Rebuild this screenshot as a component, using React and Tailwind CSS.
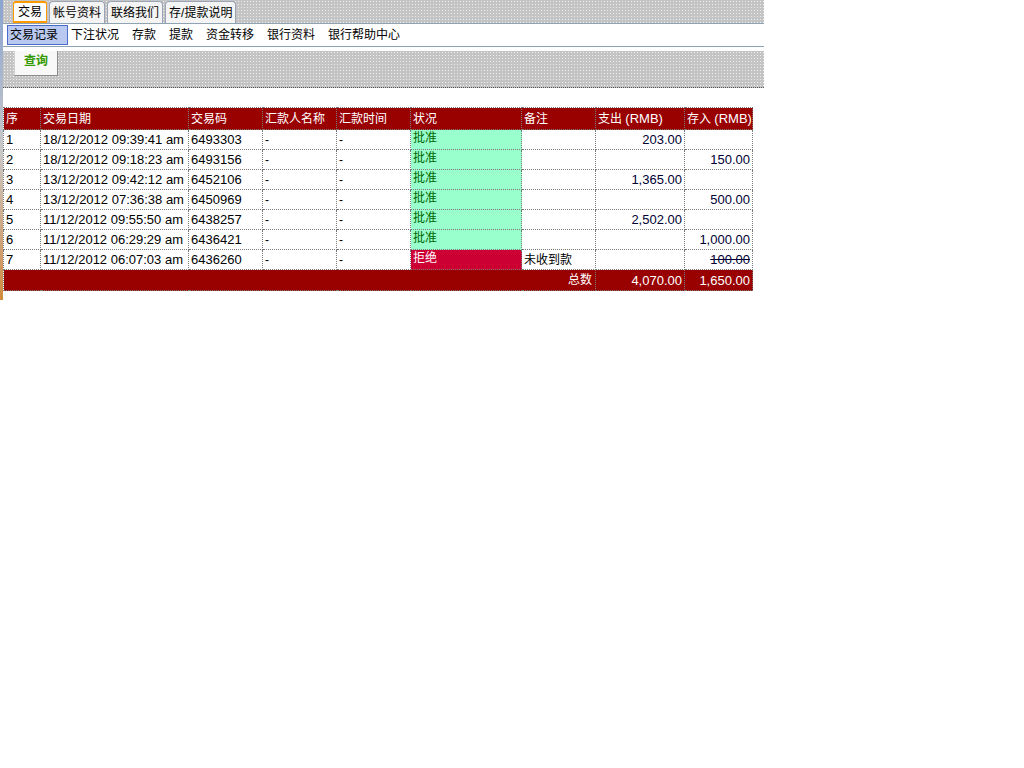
import React from "react";

const rows = [
    { no: "1", date: "18/12/2012 09:39:41 am", code: "6493303", status: "批准", note: "", out: "203.00", inn: "" },
    { no: "2", date: "18/12/2012 09:18:23 am", code: "6493156", status: "批准", note: "", out: "", inn: "150.00" },
    { no: "3", date: "13/12/2012 09:42:12 am", code: "6452106", status: "批准", note: "", out: "1,365.00", inn: "" },
    { no: "4", date: "13/12/2012 07:36:38 am", code: "6450969", status: "批准", note: "", out: "", inn: "500.00" },
    { no: "5", date: "11/12/2012 09:55:50 am", code: "6438257", status: "批准", note: "", out: "2,502.00", inn: "" },
    { no: "6", date: "11/12/2012 06:29:29 am", code: "6436421", status: "批准", note: "", out: "", inn: "1,000.00" },
    { no: "7", date: "11/12/2012 06:07:03 am", code: "6436260", status: "拒绝", note: "未收到款", out: "", inn: "100.00", rejected: true },
];

const tabs = ["交易", "帐号资料", "联络我们", "存/提款说明"];
const subnav = ["下注状况", "存款", "提款", "资金转移", "银行资料", "银行帮助中心"];

const dots = "bg-[#c4c4c4] bg-[radial-gradient(circle,#eeeeee_0.7px,transparent_0.9px)] bg-[length:3px_3px]";
const td = "border border-dotted border-[#7a7a7a] h-[20px] px-[2px] py-0 align-middle whitespace-nowrap";
const num = "text-[13px]";
const th = "border border-dotted border-[#7a7a7a] h-[22px] px-[2px] py-0 text-left font-normal bg-[#990000] text-white whitespace-nowrap";

function App() {
    return (
        <div className="relative w-[1024px] h-[768px] bg-white text-[12px] text-black font-['Liberation_Sans','Noto_Sans_CJK_SC',sans-serif] leading-none">
            {/* left decoration strip */}
            <div className="absolute left-0 top-0 w-[3px] h-[300px] bg-gradient-to-b from-[#8aa4d0] via-[#c8c8c8] to-[#d08a3a]" />

            <div className="ml-[3px] w-[761px]">
                {/* top tabs */}
                <div className={`${dots} h-[24px] flex items-end pl-[10px] gap-[2px] border-b border-[#8fa3b3]`}>
                    {tabs.map((t, i) => (
                        <div
                            key={t}
                            className={
                                i === 0
                                    ? "h-[22px] px-[4px] flex items-center bg-white border-t-2 border-x border-[#ff9900] rounded-t-[3px] border-b-2 border-b-[#ff9900]"
                                    : "h-[22px] px-[3px] flex items-center bg-[#f4f4f4] border-t border-x border-[#9aa4b8] rounded-t-[4px]"
                            }
                        >
                            {t}
                        </div>
                    ))}
                </div>

                {/* sub nav */}
                <div className="h-[23px] bg-white flex items-center border-b border-[#8fa3b3]">
                    <div className="ml-[4px] h-[20px] w-[61px] flex items-center pl-[2px] bg-[#b8c8f0] border border-[#4a6cc8]">
                        交易记录
                    </div>
                    <div className="ml-[3px] flex items-center">
                        {subnav.map((s) => (
                            <span key={s} className="mr-[13px]">{s}</span>
                        ))}
                    </div>
                </div>

                {/* query band */}
                <div className={`${dots} mt-[4px] h-[37px] border-b border-dotted border-[#555] pl-[11px]`}>
                    <div className="w-[44px] h-[25px] bg-[#f8f8f8] border-r border-b border-[#8a8a8a] border-l border-l-[#cfcfcf] flex justify-center pt-[4px] text-[#339900] font-bold">
                        查询
                    </div>
                </div>

                {/* table */}
                <table className="mt-[19px] border-collapse table-fixed w-[749px]">
                    <colgroup>
                        <col className="w-[37px]" />
                        <col className="w-[148px]" />
                        <col className="w-[74px]" />
                        <col className="w-[74px]" />
                        <col className="w-[74px]" />
                        <col className="w-[111px]" />
                        <col className="w-[74px]" />
                        <col className="w-[89px]" />
                        <col className="w-[68px]" />
                    </colgroup>
                    <thead>
                        <tr>
                            <th className={th}>序</th>
                            <th className={th}>交易日期</th>
                            <th className={th}>交易码</th>
                            <th className={th}>汇款人名称</th>
                            <th className={th}>汇款时间</th>
                            <th className={th}>状况</th>
                            <th className={th}>备注</th>
                            <th className={th}>支出 <span className={num}>(RMB)</span></th>
                            <th className={th}>存入 <span className={num}>(RMB)</span></th>
                        </tr>
                    </thead>
                    <tbody>
                        {rows.map((r) => (
                            <tr key={r.no}>
                                <td className={`${td} ${num}`}>{r.no}</td>
                                <td className={`${td} ${num}`}>{r.date}</td>
                                <td className={`${td} ${num}`}>{r.code}</td>
                                <td className={td}>-</td>
                                <td className={td}>-</td>
                                <td className={`${td} align-top pt-[2px] ${r.rejected ? "bg-[#cc0033] text-white" : "bg-[#99ffcc] text-[#006600]"}`}>
                                    {r.status}
                                </td>
                                <td className={td}>{r.note}</td>
                                <td className={`${td} ${num} text-right text-[#000033]`}>{r.out}</td>
                                <td className={`${td} ${num} text-right text-[#000033] ${r.rejected ? "line-through" : ""}`}>{r.inn}</td>
                            </tr>
                        ))}
                        <tr>
                            <td colSpan={7} className={`${td} h-[21px] bg-[#990000] text-white text-right pr-[3px]`}>总数</td>
                            <td className={`${td} h-[21px] ${num} bg-[#990000] text-white text-right`}>4,070.00</td>
                            <td className={`${td} h-[21px] ${num} bg-[#990000] text-white text-right`}>1,650.00</td>
                        </tr>
                    </tbody>
                </table>
            </div>
        </div>
    );
}

export default App;
